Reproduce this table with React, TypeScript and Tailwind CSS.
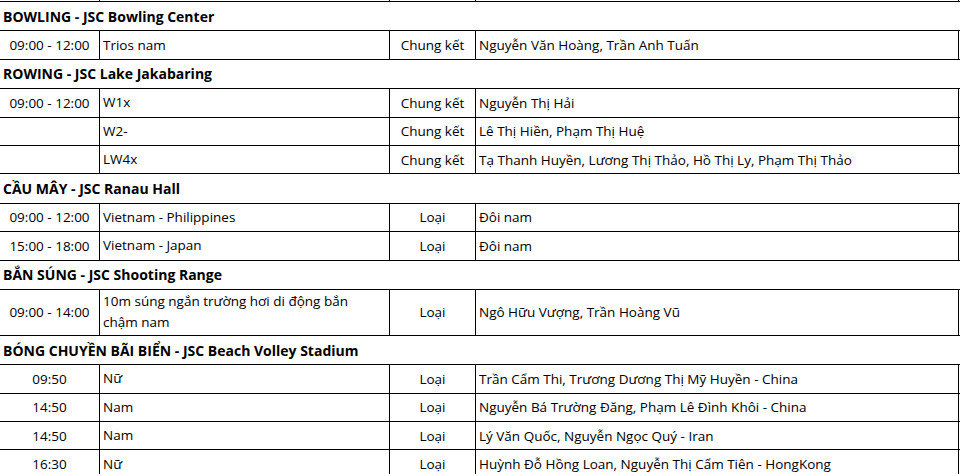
import React from "react";

type Row = { time: string; event: React.ReactNode; round: string; athletes: string; tall?: boolean };
type Section = { title: string; rows: Row[] };

const sections: Section[] = [
  {
    title: "BOWLING - JSC Bowling Center",
    rows: [{ time: "09:00 - 12:00", event: "Trios nam", round: "Chung kết", athletes: "Nguyễn Văn Hoàng, Trần Anh Tuấn" }],
  },
  {
    title: "ROWING - JSC Lake Jakabaring",
    rows: [
      { time: "09:00 - 12:00", event: "W1x", round: "Chung kết", athletes: "Nguyễn Thị Hải" },
      { time: "", event: "W2-", round: "Chung kết", athletes: "Lê Thị Hiền, Phạm Thị Huệ" },
      { time: "", event: "LW4x", round: "Chung kết", athletes: "Tạ Thanh Huyền, Lương Thị Thảo, Hồ Thị Ly, Phạm Thị Thảo" },
    ],
  },
  {
    title: "CẦU MÂY - JSC Ranau Hall",
    rows: [
      { time: "09:00 - 12:00", event: "Vietnam - Philippines", round: "Loại", athletes: "Đôi nam" },
      { time: "15:00 - 18:00", event: "Vietnam - Japan", round: "Loại", athletes: "Đôi nam" },
    ],
  },
  {
    title: "BẮN SÚNG - JSC Shooting Range",
    rows: [
      {
        time: "09:00 - 14:00",
        event: (
          <>
            10m súng ngắn trường hơi di động bắn
            <br />
            chậm nam
          </>
        ),
        round: "Loại",
        athletes: "Ngô Hữu Vượng, Trần Hoàng Vũ",
        tall: true,
      },
    ],
  },
  {
    title: "BÓNG CHUYỀN BÃI BIỂN - JSC Beach Volley Stadium",
    rows: [
      { time: "09:50", event: "Nữ", round: "Loại", athletes: "Trần Cẩm Thi, Trương Dương Thị Mỹ Huyền - China" },
      { time: "14:50", event: "Nam", round: "Loại", athletes: "Nguyễn Bá Trường Đăng, Phạm Lê Đình Khôi - China" },
      { time: "14:50", event: "Nam", round: "Loại", athletes: "Lý Văn Quốc, Nguyễn Ngọc Quý - Iran" },
      { time: "16:30", event: "Nữ", round: "Loại", athletes: "Huỳnh Đỗ Hồng Loan, Nguyễn Thị Cẩm Tiên - HongKong" },
    ],
  },
];

const grid = "grid grid-cols-[100px_290px_86px_483px]";
const cell = "border-r border-black flex items-center";

function DataRow({ row }: { row: Row }) {
  return (
    <div className={`${grid} border-b border-black ${row.tall ? "h-[46px]" : "h-[28.4px]"}`}>
      <div className={`${cell} justify-center`}>{row.time}</div>
      <div className={`${cell} px-[3px] leading-[21px]`}>
        <span>{row.event}</span>
      </div>
      <div className={`${cell} justify-center`}>{row.round}</div>
      <div className={`${cell} px-[3px] whitespace-nowrap`}>{row.athletes}</div>
    </div>
  );
}

export default function App() {
  return (
    <div
      className="w-[960px] h-[474px] overflow-hidden bg-white text-black text-[13.5px]"
      style={{ fontFamily: '"Open Sans", "Noto Sans", sans-serif' }}
    >
      {/* tail of the previous row */}
      <div className={`${grid} h-[2px] border-b border-black`}>
        <div className="border-r border-black" />
        <div className="border-r border-black" />
        <div className="border-r border-black" />
        <div className="border-r border-black" />
      </div>
      {sections.map((s) => (
        <div key={s.title}>
          <div className="h-[28.4px] flex items-center px-[3px] font-bold text-[14px]">{s.title}</div>
          <div className="border-t border-black">
            {s.rows.map((r, i) => (
              <DataRow key={i} row={r} />
            ))}
          </div>
        </div>
      ))}
    </div>
  );
}
